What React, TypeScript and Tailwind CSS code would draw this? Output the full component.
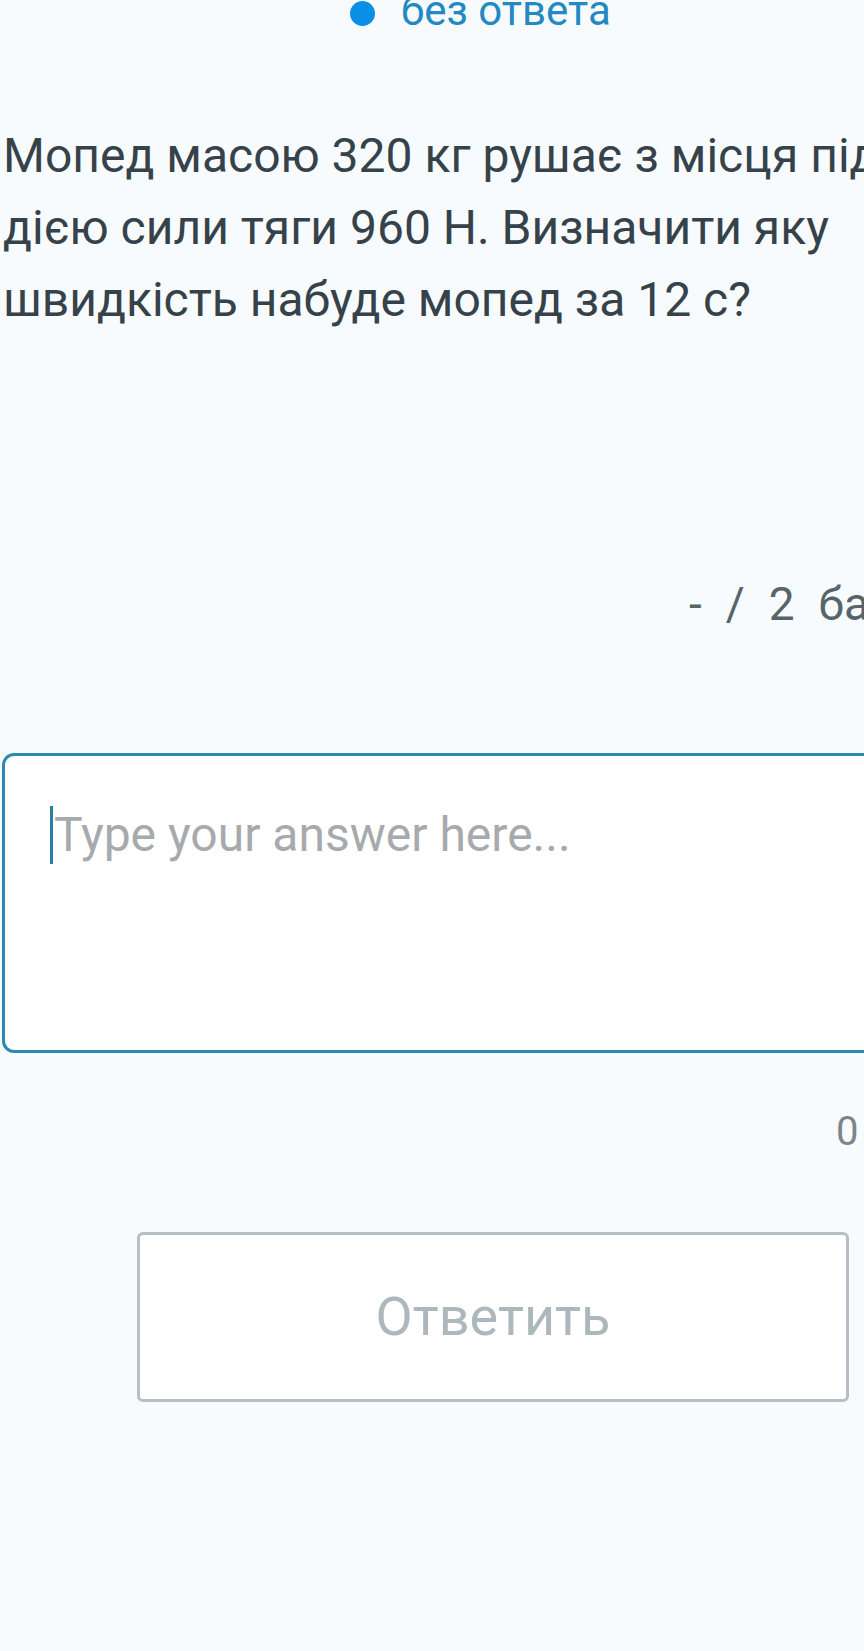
import React from "react";

export default function App() {
    return (
        <div className="w-[864px] h-[1651px] overflow-hidden bg-[#f8fbfd] font-['Roboto','Noto_Sans',sans-serif]">
            <div className="w-[940px]">
                {/* Status */}
                <div className="flex items-center gap-[26px] pl-[350px] -mt-[10px] h-[42px]">
                    <span className="w-[25px] h-[25px] rounded-full bg-[#0b8ee6] mt-[4px]"></span>
                    <span className="text-[42px] leading-[42px] text-[#2289c2] whitespace-nowrap">без ответа</span>
                </div>

                {/* Question */}
                <p className="mt-[88px] pl-[3px] w-[930px] text-[48px] leading-[72px] text-[#36424a]">
                    Мопед масою 320 кг рушає з місця під дією сили тяги 960 Н. Визначити яку швидкість набуде мопед за 12 с?
                </p>

                {/* Score */}
                <div className="mt-[245px] pl-[689px] flex items-center gap-[24px] text-[46px] leading-[46px] text-[#56646b] whitespace-nowrap">
                    <span>-</span>
                    <span>/</span>
                    <span>2</span>
                    <span>бали</span>
                </div>

                {/* Answer field */}
                <div className="mt-[126px] ml-[2px] h-[300px] bg-white border-[3px] border-[#2b8aae] rounded-[12px] pl-[45px] pt-[50px]">
                    <div className="flex items-center h-[58px]">
                        <span className="w-[3px] h-[58px] bg-[#2b7fa6]"></span>
                        <span className="ml-[1px] text-[48px] leading-[58px] text-[#a7aaad] whitespace-nowrap">Type your answer here...</span>
                    </div>
                </div>

                {/* Counter */}
                <div className="mt-[59px] pl-[836px] text-[40px] leading-[40px] text-[#7a868b]">0</div>

                {/* Submit */}
                <div className="mt-[80px] ml-[137px] w-[712px] h-[170px] bg-white border-[3px] border-[#b6bfc3] rounded-[6px] flex items-center justify-center">
                    <span className="text-[54px] leading-[54px] text-[#adb8bd]">Ответить</span>
                </div>
            </div>
        </div>
    );
}
